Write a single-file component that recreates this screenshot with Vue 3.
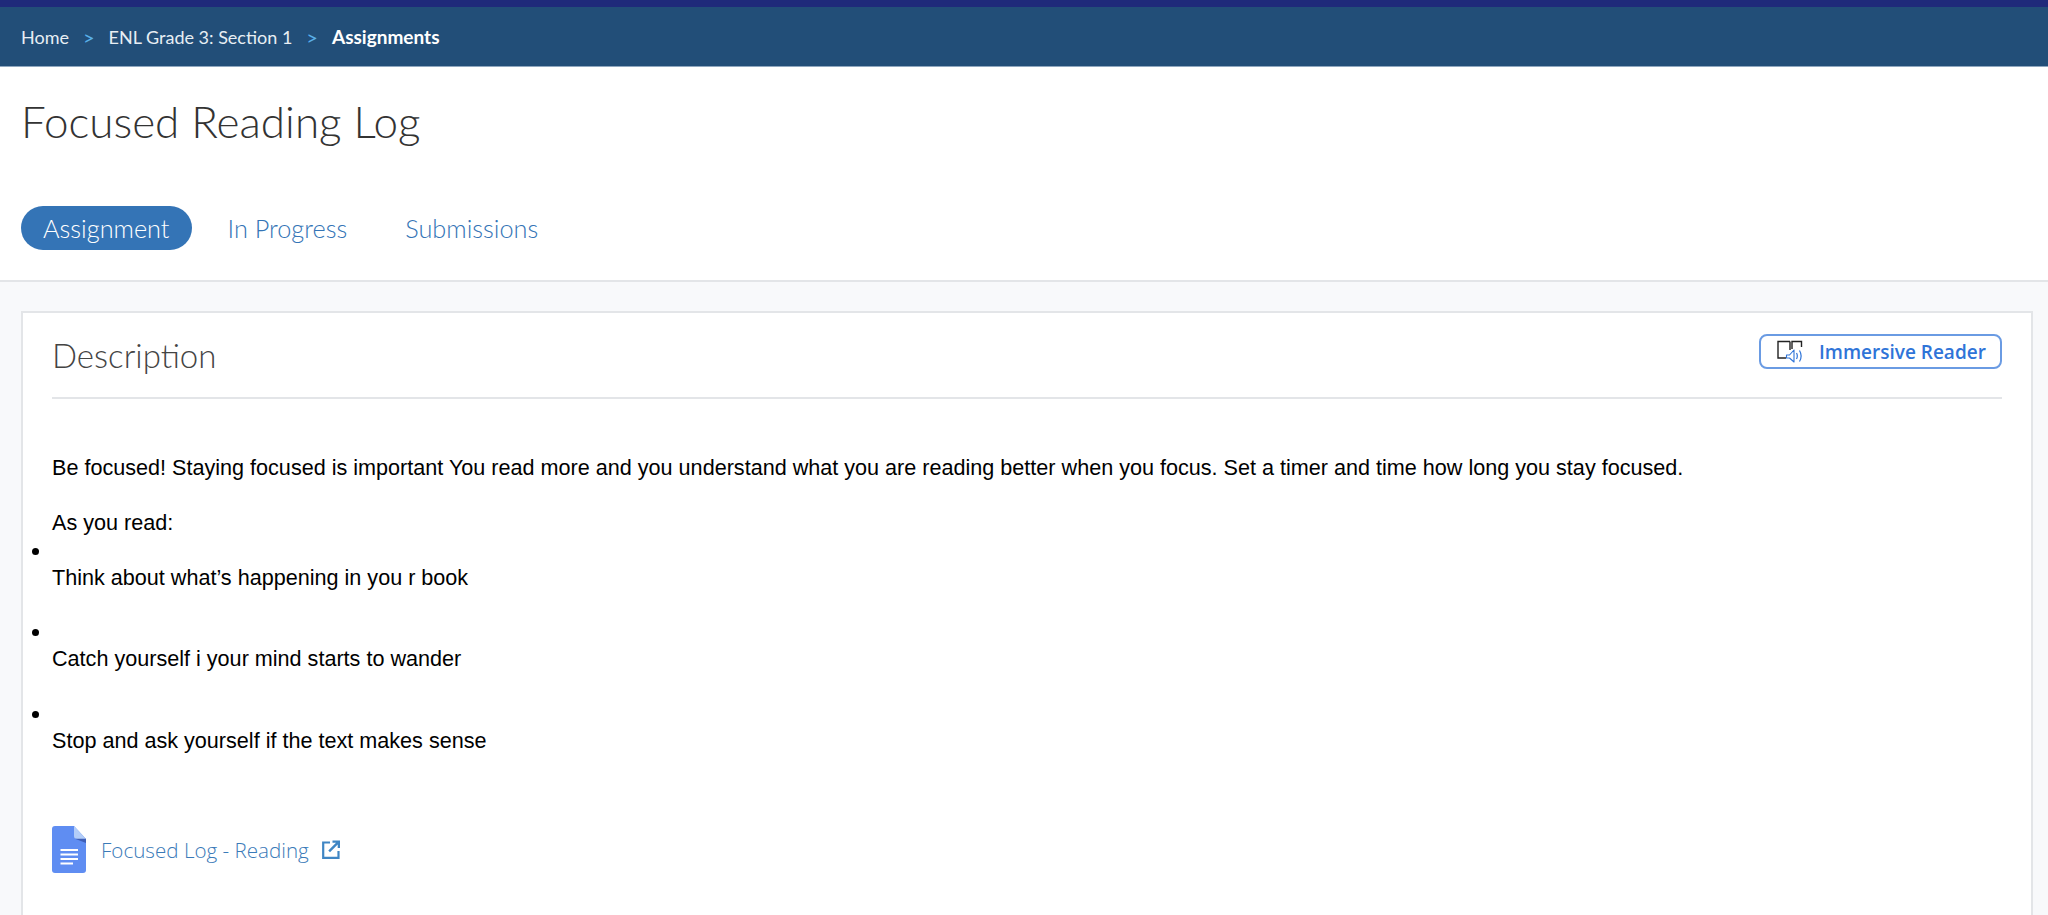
<template>
  <div class="page">
    <div class="topstrip"></div>
    <nav class="crumbs">
      <a>Home</a>
      <span class="sep">&gt;</span>
      <a>ENL Grade 3: Section 1</a>
      <span class="sep">&gt;</span>
      <a class="current">Assignments</a>
    </nav>

    <header class="head">
      <h1>Focused Reading Log</h1>
      <div class="tabs">
        <a v-for="tab in tabs" :key="tab" class="tab" :class="{ active: tab === 'Assignment' }">{{ tab }}</a>
      </div>
    </header>

    <main class="content">
      <section class="card">
        <div class="card-head">
          <h2>Description</h2>
          <button class="btn-reader">
            <svg width="26" height="23" viewBox="0 0 26 23" fill="none">
              <path d="M13 1.500H1V18h8" stroke="#222" stroke-width="1.400" />
              <path d="M13 1.500V10M15 9V1.500h9.500V7" stroke="#222" stroke-width="1.400" />
              <path d="M9.500 15h3l4.500-5v12l-4.500-4h-3z" fill="#fff" stroke="#2f74d8" stroke-width="1.100" stroke-linejoin="round" />
              <path d="M19.500 13c1 1.700 1 4 0 6M22.500 10.500c1.900 3.200 1.900 7.800 0 11" stroke="#2f74d8" stroke-width="1.200" />
            </svg>
            <span>Immersive Reader</span>
          </button>
        </div>

        <div class="body">
          <p>Be focused! Staying focused is important You read more and you understand what you are reading better when you focus. Set a timer and time how long you stay focused.</p>
          <p>As you read:</p>
          <ul>
            <li v-for="item in items" :key="item"><p>{{ item }}</p></li>
          </ul>
        </div>

        <div class="attachment">
          <svg class="doc" width="34" height="47" viewBox="0 0 34 47">
            <path d="M3 0h19l12 13v31a3 3 0 0 1-3 3H3a3 3 0 0 1-3-3V3a3 3 0 0 1 3-3z" fill="#5f8df2" />
            <path d="M22 0l12 13H25a3 3 0 0 1-3-3z" fill="#b3cdf8" />
            <path d="M23 12.800h11v4.200z" fill="#3f5fb8" />
            <path d="M8.500 24h17.500M8.500 28.500h17.500M8.500 33h17.500M8.500 37.500h12.500" stroke="#fff" stroke-width="1.800" />
          </svg>
          <a class="file-link">Focused Log - Reading</a>
          <svg class="ext" width="18" height="19" viewBox="0 0 18 19" fill="none">
            <path d="M8 2.500H1.200v15.300h15.300V11" stroke="#3f86c4" stroke-width="2.200" />
            <path d="M10.500 0.500H18v7.500h-2.300V4.500L8 12.200 6.300 10.500 14 2.800h-3.500z" fill="#3f86c4" />
          </svg>
        </div>
      </section>
    </main>
  </div>
</template>

<script setup>
const tabs = ['Assignment', 'In Progress', 'Submissions'];

const items = [
  'Think about what’s happening in you r book',
  'Catch yourself i your mind starts to wander',
  'Stop and ask yourself if the text makes sense',
];
</script>

<style>
body {
  background: #f8f9fb;
}
</style>

<style scoped>
.page {
  height: 915px;
  overflow: hidden;
  background: #f8f9fb;
  font-family: Lato, sans-serif;
}

.topstrip {
  height: 7px;
  background: #1f2a7a;
}

.crumbs {
  height: 60px;
  padding-left: 21px;
  display: flex;
  align-items: center;
  gap: 14px;
  background: #224e78;
  border-bottom: 1px solid #8fa7bf;
  box-sizing: border-box;
  color: #e8eef4;
  font-size: 18px;
  font-weight: 400;
}

.crumbs .sep {
  color: #5ab0e8;
  font-size: 20px;
  font-weight: 400;
}

.crumbs .current {
  color: #fff;
  font-size: 19px;
  font-weight: 700;
}

.head {
  background: #fff;
  padding: 26px 21px 30px;
  border-bottom: 2px solid #e3e5e8;
}

h1 {
  margin: 0 0 57px;
  color: #333;
  font-size: 44px;
  line-height: 56px;
  font-weight: 300;
}

.tabs {
  display: flex;
  gap: 14px;
}

.tab {
  padding: 0 22px;
  height: 44px;
  line-height: 44px;
  border-radius: 22px;
  color: #3474b6;
  font-size: 25.300px;
  font-weight: 300;
}

.tab.active {
  background: #3474b6;
  color: #fff;
}

.content {
  padding: 29px 15px 0 21px;
}

.card {
  background: #fff;
  border: 2px solid #e3e5e8;
  border-bottom: 0;
  padding: 0 29px;
  height: 640px;
  box-sizing: border-box;
}

.card-head {
  height: 84px;
  display: flex;
  align-items: center;
  justify-content: space-between;
  border-bottom: 2px solid #e3e5e8;
}

h2 {
  margin: 0;
  color: #444;
  font-size: 33px;
  font-weight: 300;
}

.btn-reader {
  width: 243px;
  height: 35px;
  margin-top: -7px;
  padding: 0 0 0 16px;
  display: flex;
  align-items: center;
  gap: 16px;
  background: #fff;
  border: 2px solid #6a9be3;
  border-radius: 8px;
  color: #2f74d8;
  font-family: "Open Sans", sans-serif;
  font-size: 19px;
  font-weight: 600;
}

.body {
  padding-top: 55px;
  color: #000;
  font-family: "Liberation Sans", sans-serif;
  font-size: 21.600px;
  line-height: 28px;
}

.body p {
  margin: 0;
}

.body > p:first-child {
  margin-bottom: 27px;
}

ul {
  margin: 0;
  padding: 0;
}

li {
  height: 81.400px;
}

li::before {
  content: "\200b";
  display: block;
  height: 27px;
}

.attachment {
  margin-top: 45px;
  display: flex;
  align-items: center;
}

.doc {
  margin-right: 15px;
}

.file-link {
  color: #3a7ab8;
  font-family: "Open Sans", sans-serif;
  font-size: 20.600px;
  font-weight: 300;
}

.ext {
  margin-left: 13px;
}
</style>
